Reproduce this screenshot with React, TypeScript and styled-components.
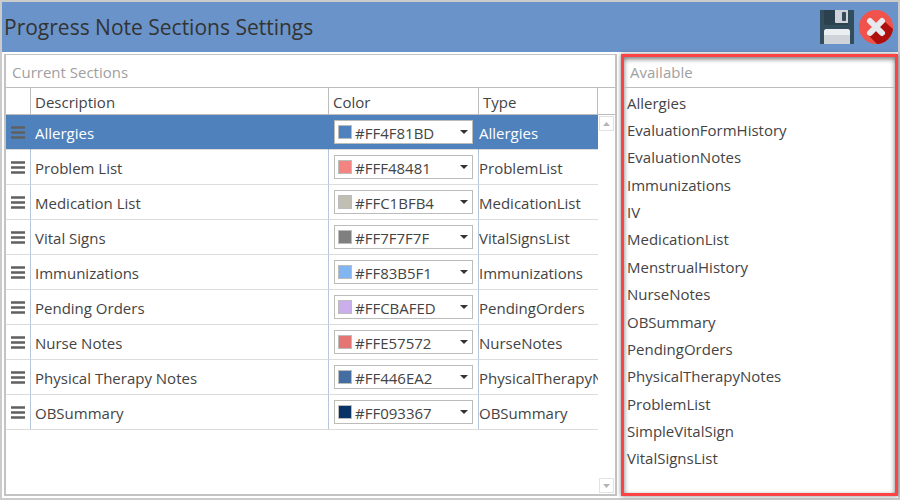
import React, { useState } from "react";
import styled, { createGlobalStyle } from "styled-components";

const GlobalStyle = createGlobalStyle`
  *, *::before, *::after { box-sizing: border-box; }
  body {
    margin: 0;
    background: #fff;
    color: #444;
    font: 15px/20px "Open Sans", "Noto Sans", sans-serif;
  }
`;

const Window = styled.main`
  display: flex;
  flex-direction: column;
  min-height: 100vh;
  border: 2px solid #cbcbcb;
  background: #fff;
`;

const TitleBar = styled.header`
  display: flex;
  align-items: center;
  justify-content: space-between;
  height: 50px;
  padding: 0 5px 0 2px;
  background: #6a93c9;
`;

const Title = styled.h1`
  margin: 0;
  font-size: 21px;
  line-height: 30px;
  font-weight: 400;
  color: #333;
`;

const Actions = styled.div`
  display: flex;
  gap: 5px;
`;

const IconButton = styled.button`
  display: block;
  width: 34px;
  height: 34px;
  padding: 0;
  border: 0;
  background: none;
  cursor: pointer;
  svg { display: block; }
`;

const Body = styled.div`
  flex: 1;
  display: grid;
  grid-template-columns: minmax(0, 613fr) minmax(0, 277fr);
  gap: 4px;
  padding: 2px 0 2px 2px;
`;

const CurrentPanel = styled.section`
  display: flex;
  flex-direction: column;
  border: 2px solid #c3c3c3;
  border-top-width: 1px;
`;

const AvailablePanel = styled.section`
  display: flex;
  flex-direction: column;
  border: 3px solid #fb4245;
  box-shadow: 0 0 4px rgba(0, 0, 0, 0.5), inset 0 2px 5px rgba(0, 0, 0, 0.55);
`;

const PanelTitle = styled.h2<{ $compact?: boolean }>`
  flex: none;
  height: ${(p) => (p.$compact ? "31px" : "33px")};
  margin: 0;
  padding: 0 6px;
  border-bottom: 1px solid #bdbdbd;
  font-size: 15px;
  line-height: ${(p) => (p.$compact ? "31px" : "34px")};
  font-weight: 400;
  color: #a0a0a0;
`;

const GridArea = styled.div`
  flex: 1;
  display: grid;
  grid-template-columns: minmax(0, 1fr) 17px;
`;

const Table = styled.table`
  width: 100%;
  table-layout: fixed;
  border-collapse: separate;
  border-spacing: 0;
  align-self: start;
`;

const Col = styled.col<{ $width?: number }>`
  width: ${(p) => (p.$width ? `${p.$width}px` : "auto")};
`;

const HeadCell = styled.th`
  height: 27px;
  padding: 2px 4px 0;
  border-right: 1px solid #bdbdbd;
  border-bottom: 1px solid #bdbdbd;
  font-weight: 400;
  text-align: left;
`;

const Row = styled.tr<{ $selected: boolean }>`
  background: ${(p) => (p.$selected ? "#4f81bd" : "#fff")};
  color: ${(p) => (p.$selected ? "#fff" : "#444")};
  td { border-right-color: ${(p) => (p.$selected ? "#4f81bd" : "#b8c8dc")}; }
`;

const Cell = styled.td<{ $flush?: boolean }>`
  height: 35px;
  padding: ${(p) => (p.$flush ? "2px 0 0" : "2px 4px 0")};
  border-right: 1px solid;
  border-bottom: 1px solid #dcdcdc;
  overflow: hidden;
  white-space: nowrap;
  &:last-child { border-right: 0; }
`;

const ControlCell = styled(Cell)`
  padding: 0 5px;
`;

const Handle = styled.button`
  display: block;
  width: 14px;
  height: 13px;
  padding: 0;
  border: 0;
  background: none;
  cursor: grab;
  svg { display: block; }
`;

const Combo = styled.div`
  position: relative;
  display: flex;
  align-items: center;
  height: 24px;
  padding-left: 3px;
  border: 1px solid #bcbcbc;
  background: #fff;
`;

const Swatch = styled.span<{ $color: string }>`
  flex: none;
  width: 14px;
  height: 14px;
  border: 1px solid #bcbcbc;
  background: ${(p) => p.$color};
`;

const ColorSelect = styled.select`
  flex: 1;
  min-width: 0;
  height: 22px;
  padding: 2px 0 0 3px;
  border: 0;
  outline: 0;
  appearance: none;
  background: transparent;
  color: #444;
  font: inherit;
`;

const Caret = styled.svg`
  position: absolute;
  right: 4px;
  top: 9px;
  pointer-events: none;
`;

const ScrollBar = styled.div`
  display: flex;
  flex-direction: column;
  justify-content: space-between;
  align-items: center;
  padding-bottom: 1px;
`;

const ScrollTop = styled.div`
  align-self: stretch;
  height: 27px;
  border-bottom: 1px solid #bdbdbd;
`;

const ScrollButton = styled.button`
  display: grid;
  place-items: center;
  width: 15px;
  height: 15px;
  margin-top: 1px;
  padding: 0;
  border: 1px solid #e2e2e2;
  background: #fff;
`;

const ScrollHead = styled.div`
  display: flex;
  flex-direction: column;
  align-items: center;
  align-self: stretch;
`;

const AvailableList = styled.ul`
  flex: 1;
  display: grid;
  grid-auto-rows: 1fr;
  align-items: center;
  margin: 0;
  padding: 1px 3px 21px;
  list-style: none;
`;

const sections = [
  ["Allergies", "#FF4F81BD", "Allergies"],
  ["Problem List", "#FFF48481", "ProblemList"],
  ["Medication List", "#FFC1BFB4", "MedicationList"],
  ["Vital Signs", "#FF7F7F7F", "VitalSignsList"],
  ["Immunizations", "#FF83B5F1", "Immunizations"],
  ["Pending Orders", "#FFCBAFED", "PendingOrders"],
  ["Nurse Notes", "#FFE57572", "NurseNotes"],
  ["Physical Therapy Notes", "#FF446EA2", "PhysicalTherapyNotes"],
  ["OBSummary", "#FF093367", "OBSummary"],
];

const available = [
  "Allergies", "EvaluationFormHistory", "EvaluationNotes", "Immunizations", "IV",
  "MedicationList", "MenstrualHistory", "NurseNotes", "OBSummary", "PendingOrders",
  "PhysicalTherapyNotes", "ProblemList", "SimpleVitalSign", "VitalSignsList",
];

// Values are stored as #AARRGGBB; CSS takes only the last six digits here.
const toCss = (argb: string) => `#${argb.slice(3)}`;

function SaveIcon() {
  return (
    <svg width="34" height="34" viewBox="0 0 34 34" aria-hidden="true">
      <path d="M0 0H34V34H0Z" fill="#324d5b" />
      <path d="M4 0H28V15H6Q4 15 4 13Z" fill="#2b414d" />
      <path d="M15 0H28V13H16Q15 13 15 12Z" fill="#d0d4d8" />
      <rect x="22" y="2" width="4" height="9" rx="1" fill="#324d5b" />
      <path d="M4 34V22Q4 19 7 19H27Q30 19 30 22V34Z" fill="#d0d4d8" />
      <path d="M4 25V22Q4 19 7 19H27Q30 19 30 22V25Z" fill="#eceff2" />
    </svg>
  );
}

function CloseIcon() {
  return (
    <svg width="34" height="34" viewBox="0 0 34 34" aria-hidden="true">
      <circle cx="17" cy="17" r="17" fill="#f1524b" />
      <path d="M25 11L34 19A17 17 0 0 1 18 34L9 25Z" fill="#ad0e0e" />
      <path d="M11 11L23 23M23 11L11 23" stroke="#e6e9ee" strokeWidth="6" strokeLinecap="round" />
    </svg>
  );
}

function Combobox({ label, value }: { label: string; value: string }) {
  const [color, setColor] = useState(value);
  return (
    <Combo>
      <Swatch $color={toCss(color)} />
      <ColorSelect aria-label={`${label} color`} value={color} onChange={(e) => setColor(e.target.value)}>
        {sections.map(([, c]) => <option key={c}>{c}</option>)}
      </ColorSelect>
      <Caret width="8" height="4" viewBox="0 0 8 4"><path d="M0 0H8L4 4Z" fill="#333" /></Caret>
    </Combo>
  );
}

export default function App() {
  const [selected, setSelected] = useState(0);
  return (
    <>
      <GlobalStyle />
      <Window>
        <TitleBar>
          <Title>Progress Note Sections Settings</Title>
          <Actions>
            <IconButton aria-label="Save"><SaveIcon /></IconButton>
            <IconButton aria-label="Close"><CloseIcon /></IconButton>
          </Actions>
        </TitleBar>
        <Body>
          <CurrentPanel>
            <PanelTitle>Current Sections</PanelTitle>
            <GridArea>
              <Table>
                <colgroup>
                  <Col $width={25} /><Col /><Col $width={150} /><Col $width={119} />
                </colgroup>
                <thead>
                  <tr>
                    <HeadCell aria-label="Reorder" />
                    <HeadCell>Description</HeadCell>
                    <HeadCell>Color</HeadCell>
                    <HeadCell>Type</HeadCell>
                  </tr>
                </thead>
                <tbody>
                  {sections.map(([name, color, type], i) => (
                    <Row key={name} $selected={i === selected} onClick={() => setSelected(i)}>
                      <ControlCell>
                        <Handle aria-label={`Move ${name}`}>
                          <svg width="14" height="13" viewBox="0 0 14 13">
                            <path d="M0 1.5H14M0 6.5H14M0 11.5H14" stroke="#606060" strokeWidth="2.6" />
                          </svg>
                        </Handle>
                      </ControlCell>
                      <Cell>{name}</Cell>
                      <ControlCell><Combobox label={name} value={color} /></ControlCell>
                      <Cell $flush>{type}</Cell>
                    </Row>
                  ))}
                </tbody>
              </Table>
              <ScrollBar>
                <ScrollHead>
                  <ScrollTop />
                  <ScrollButton aria-label="Scroll up">
                    <svg width="7" height="4" viewBox="0 0 7 4"><path d="M0 4H7L3.5 0Z" fill="#b4b4b4" /></svg>
                  </ScrollButton>
                </ScrollHead>
                <ScrollButton aria-label="Scroll down">
                  <svg width="7" height="4" viewBox="0 0 7 4"><path d="M0 0H7L3.5 4Z" fill="#b4b4b4" /></svg>
                </ScrollButton>
              </ScrollBar>
            </GridArea>
          </CurrentPanel>
          <AvailablePanel>
            <PanelTitle $compact>Available</PanelTitle>
            <AvailableList>
              {available.map((item) => <li key={item}>{item}</li>)}
            </AvailableList>
          </AvailablePanel>
        </Body>
      </Window>
    </>
  );
}
